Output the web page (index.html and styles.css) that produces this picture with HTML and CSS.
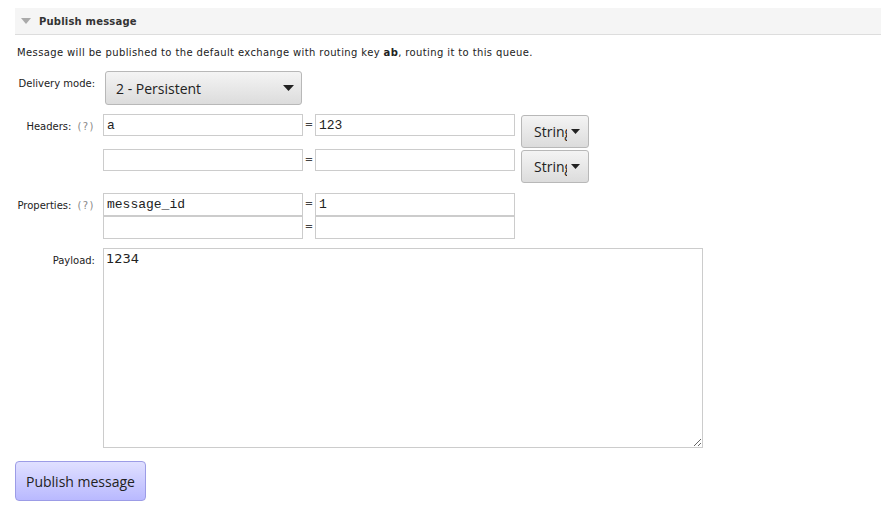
FILE: index.html
```html
<!DOCTYPE html>
<html>
<head>
<meta charset="utf-8">
<link rel="stylesheet" href="styles.css">
</head>
<body>
<div class="section">
  <div class="section-head">
    <svg class="tri" width="10" height="6" viewBox="0 0 10 6"><path d="M0 0 H10 L5 6 Z" fill="#aaaaaa"/></svg>
    <span class="title">Publish message</span>
  </div>
  <p class="intro">Message will be published to the default exchange with routing key <b>ab</b>, routing it to this queue.</p>

  <div class="row row-delivery">
    <label class="lbl">Delivery mode:</label>
    <div class="select">
      <span class="select-text">2 - Persistent</span>
      <svg class="caret" width="11" height="6" viewBox="0 0 11 6"><path d="M0 0 H11 L5.5 6 Z" fill="#222"/></svg>
    </div>
  </div>

  <div class="row row-kv">
    <label class="lbl">Headers:<span class="help">(?)</span></label>
    <div class="kv-list">
      <div class="kv">
        <input class="field mono" type="text" value="a">
        <span class="eq">=</span>
        <input class="field mono" type="text" value="123">
        <div class="typebtn"><span class="typetext">String</span><svg class="caret" width="9" height="5" viewBox="0 0 9 5"><path d="M0 0 H9 L4.5 5 Z" fill="#222"/></svg></div>
      </div>
      <div class="kv">
        <input class="field mono" type="text" value="">
        <span class="eq">=</span>
        <input class="field mono" type="text" value="">
        <div class="typebtn"><span class="typetext">String</span><svg class="caret" width="9" height="5" viewBox="0 0 9 5"><path d="M0 0 H9 L4.5 5 Z" fill="#222"/></svg></div>
      </div>
    </div>
  </div>

  <div class="row row-props">
    <label class="lbl">Properties:<span class="help">(?)</span></label>
    <div class="kv-list">
      <div class="kv">
        <input class="field tall mono" type="text" value="message_id">
        <span class="eq">=</span>
        <input class="field tall mono" type="text" value="1">
      </div>
      <div class="kv">
        <input class="field tall mono" type="text" value="">
        <span class="eq">=</span>
        <input class="field tall mono" type="text" value="">
      </div>
    </div>
  </div>

  <div class="row row-payload">
    <label class="lbl">Payload:</label>
    <textarea class="payload">1234</textarea>
  </div>

  <button class="publish">Publish message</button>
</div>
</body>
</html>
```
FILE: styles.css
```css
html, body {
  margin: 0;
  padding: 0;
  background: #ffffff;
}
body {
  padding: 8px 0 0 15px;
  font-family: "DejaVu Sans", Verdana, sans-serif;
  font-size: 10px;
  color: #222;
}
.section-head {
  height: 26px;
  background: #f5f5f5;
  border-bottom: 1px solid #dddddd;
  display: flex;
  align-items: center;
  padding-left: 6px;
  box-sizing: content-box;
}
.tri {
  display: block;
  margin-right: 8px;
}
.title {
  font-weight: bold;
  font-size: 10px;
  color: #333;
  letter-spacing: 0.2px;
}
.intro {
  margin: 11px 0 11px 2px;
  line-height: 14px;
  color: #222;
  letter-spacing: 0.38px;
}
.intro b {
  font-weight: bold;
}
.row {
  display: flex;
  align-items: flex-start;
}
.lbl {
  width: 80px;
  margin-right: 8px;
  text-align: right;
  padding-top: 6px;
  line-height: 14px;
  color: #222;
  flex-shrink: 0;
  white-space: nowrap;
}
.help {
  color: #888;
  letter-spacing: 1.5px;
  margin-left: 6px;
}
.row-delivery {
  margin-bottom: 9px;
}
.select {
  width: 197px;
  height: 34px;
  margin-left: 2px;
  box-sizing: border-box;
  border: 1px solid #b8b8b8;
  border-radius: 3px;
  background: linear-gradient(#f4f4f4, #dcdcdc);
  display: flex;
  align-items: center;
  padding: 0 7px 0 10px;
  font-family: "Open Sans", "DejaVu Sans", sans-serif;
  font-size: 14px;
  color: #222;
}
.select .caret {
  margin-left: auto;
}
.kv {
  display: flex;
  align-items: flex-start;
}
.field {
  width: 200px;
  height: 22px;
  box-sizing: border-box;
  border: 1px solid #cccccc;
  margin: 0;
  padding: 0 3px;
  background: #fff;
  color: #222;
  outline: none;
}
.field.tall {
  height: 23px;
}
.mono {
  font-family: "Liberation Mono", "Courier New", monospace;
  font-size: 13px;
}
.eq {
  width: 12px;
  text-align: center;
  line-height: 22px;
  color: #444;
  font-size: 10px;
}
.typebtn {
  width: 68px;
  height: 33px;
  margin: 1px 0 1px 6px;
  box-sizing: border-box;
  border: 1px solid #b8b8b8;
  border-radius: 3px;
  background: linear-gradient(#f4f4f4, #dcdcdc);
  display: flex;
  align-items: center;
  padding: 0 0 0 12px;
  font-family: "Open Sans", "DejaVu Sans", sans-serif;
  font-size: 14px;
  color: #222;
}
.typetext {
  width: 33px;
  overflow: hidden;
  white-space: nowrap;
  display: block;
}
.typebtn .caret {
  margin-left: 4px;
}
.row-kv {
  margin-bottom: 9px;
}
.row-props {
  margin-bottom: 9px;
}
.payload {
  width: 600px;
  height: 200px;
  box-sizing: border-box;
  border: 1px solid #cccccc;
  margin: 0;
  padding: 2px 2px;
  font-family: "DejaVu Sans", Verdana, sans-serif;
  font-size: 13px;
  color: #222;
  outline: none;
  resize: both;
}
.publish {
  display: block;
  margin-top: 13px;
  width: 131px;
  height: 40px;
  border: 1px solid #9c9ce6;
  border-radius: 4px;
  background: linear-gradient(#e0e0ff, #b9b9ff);
  font-family: "Open Sans", "DejaVu Sans", sans-serif;
  font-size: 14px;
  color: #222;
  padding: 0;
}
```
